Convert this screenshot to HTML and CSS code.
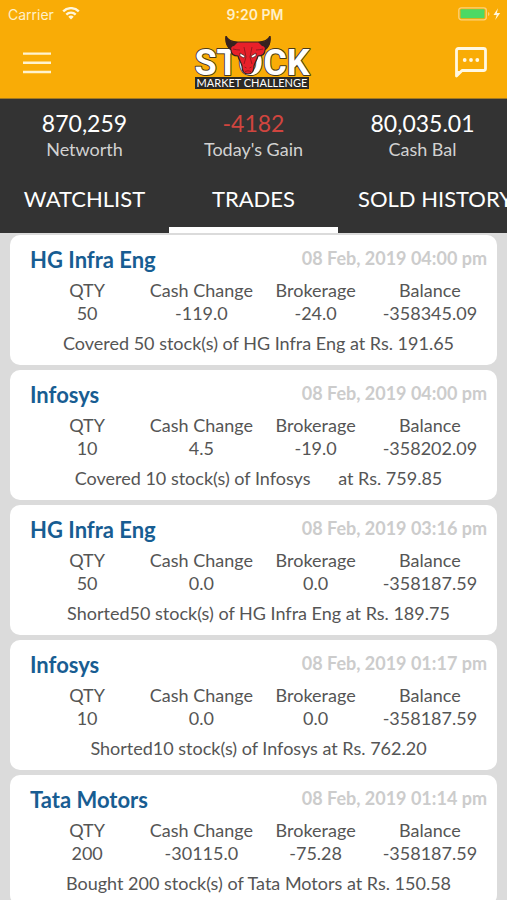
FILE: index.html
```html
<!DOCTYPE html>
<html lang="en">
<head>
<meta charset="utf-8">
<meta name="viewport" content="width=device-width, initial-scale=1">
<title>Stock Market Challenge</title>
<link rel="stylesheet" href="styles.css">
</head>
<body>
<div class="app">
  <header class="topbar">
    <div class="status">
      <div class="status-left">
        <span>Carrier</span>
        <svg width="18" height="14" viewBox="0 0 18 14" fill="none" stroke="#fff6dc" stroke-width="2.4" aria-hidden="true">
          <path d="M1.2 4.4a11 11 0 0 1 15.600 0"/>
          <path d="M4.300 7.600a6.700 6.700 0 0 1 9.400 0"/>
          <path d="M9 12.500 6.300 9.800a3.800 3.800 0 0 1 5.400 0z" fill="#fff6dc" stroke="none"/>
        </svg>
      </div>
      <span class="clock">9:20 PM</span>
      <div class="status-right">
        <svg width="44" height="14" viewBox="0 0 44 14" aria-hidden="true">
          <rect x="0.800" y="0.800" width="27.500" height="12" rx="2.500" fill="none" stroke="#fbd27a" stroke-width="1.300"/>
          <rect x="2.500" y="2.300" width="24" height="9" rx="1" fill="#4cd964"/>
          <path d="M30 5v4q1.500-.5 1.500-2T30 5z" fill="#fbd27a"/>
          <path d="M40 1.300 35.500 8h3.200l-1.500 5 5-7h-3.300z" fill="#fff6dc"/>
        </svg>
      </div>
    </div>
    <div class="navrow">
      <button class="icon-btn" aria-label="Menu">
        <svg width="28" height="22" viewBox="0 0 28 22" stroke="#fff3cf" stroke-width="2.400" aria-hidden="true"><path d="M0 1.600h28M0 10.800h28M0 20h28"/></svg>
      </button>
      <svg class="logo" width="120" height="54" viewBox="0 0 120 54" role="img" aria-label="Stock Market Challenge">
        <rect x="2" y="41" width="114" height="12" fill="#2b2925"/>
        <text class="logo-main" x="59" y="39" text-anchor="middle">STOCK</text>
        <text class="logo-sub" x="59" y="51" text-anchor="middle">MARKET CHALLENGE</text>
        <path d="M33 0c2 5 6 6 12 6h20c6 0 10-1 12-6 1 7-1 11-5 14 0 4-3 6-7 6-1 4-3 6-4 10 0 5-2 8-6 8s-6-3-6-8c-1-4-3-6-4-10-4 0-7-2-7-6-4-3-6-7-5-14z" fill="#e8202a" stroke="#33231f" stroke-width="1.200" stroke-linejoin="round"/>
        <path d="M33 0c2 5 6 6 12 6l-4 4c-2 0-3 1-3 4-4-3-6-7-5-14zM77 0c-2 5-6 6-12 6l4 4c2 0 3 1 3 4 4-3 6-7 5-14z" fill="#37221f"/>
        <path d="M47 17l5 3-1 2-4-2zM63 17l-5 3 1 2 4-2z" fill="#fff" stroke="#4a1517" stroke-width=".7"/>
        <path d="M40 13q4 1 7 1M70 13q-4 1-7 1M51 11l2 10-2 7M59 11l-2 10 2 7M51.500 31l2 1M58.500 31l-2 1M52 35.500q3-1.500 6 0" fill="none" stroke="#8d181e" stroke-width=".9"/>
      </svg>
      <button class="icon-btn" aria-label="Messages">
        <svg width="32" height="32" viewBox="0 0 32 32" aria-hidden="true">
          <path d="M1.500 29V3.500q0-2 2-2h25q2 0 2 2v18q0 2-2 2H7z" fill="none" stroke="#fff8e3" stroke-width="2.800" stroke-linejoin="round"/>
          <path d="M1 24h6l-6 6z" fill="#fff8e3"/>
          <circle cx="9.700" cy="13" r="1.900" fill="#fff8e3"/><circle cx="16" cy="13" r="1.900" fill="#fff8e3"/><circle cx="22.300" cy="13" r="1.900" fill="#fff8e3"/>
        </svg>
      </button>
    </div>
  </header>

  <section class="summary">
    <div class="stats">
      <div class="stat"><strong>870,259</strong><span>Networth</span></div>
      <div class="stat"><strong class="loss">-4182</strong><span>Today's Gain</span></div>
      <div class="stat"><strong>80,035.01</strong><span>Cash Bal</span></div>
    </div>
    <nav class="tabs">
      <a class="tab" href="#watchlist">WATCHLIST</a>
      <a class="tab active" href="#trades" aria-current="page">TRADES</a>
      <a class="tab" href="#sold">SOLD HISTORY</a>
    </nav>
  </section>

  <main class="list">
    <article class="card">
      <div class="card-head"><h2>HG Infra Eng</h2><time>08 Feb, 2019 04:00 pm</time></div>
      <table>
        <thead><tr><th>QTY</th><th>Cash Change</th><th>Brokerage</th><th>Balance</th></tr></thead>
        <tbody><tr><td>50</td><td>-119.0</td><td>-24.0</td><td>-358345.09</td></tr></tbody>
      </table>
      <p>Covered 50 stock(s) of HG Infra Eng at Rs. 191.65</p>
    </article>
    <article class="card">
      <div class="card-head"><h2>Infosys</h2><time>08 Feb, 2019 04:00 pm</time></div>
      <table>
        <thead><tr><th>QTY</th><th>Cash Change</th><th>Brokerage</th><th>Balance</th></tr></thead>
        <tbody><tr><td>10</td><td>4.5</td><td>-19.0</td><td>-358202.09</td></tr></tbody>
      </table>
      <p>Covered 10 stock(s) of Infosys      at Rs. 759.85</p>
    </article>
    <article class="card">
      <div class="card-head"><h2>HG Infra Eng</h2><time>08 Feb, 2019 03:16 pm</time></div>
      <table>
        <thead><tr><th>QTY</th><th>Cash Change</th><th>Brokerage</th><th>Balance</th></tr></thead>
        <tbody><tr><td>50</td><td>0.0</td><td>0.0</td><td>-358187.59</td></tr></tbody>
      </table>
      <p>Shorted50 stock(s) of HG Infra Eng at Rs. 189.75</p>
    </article>
    <article class="card">
      <div class="card-head"><h2>Infosys</h2><time>08 Feb, 2019 01:17 pm</time></div>
      <table>
        <thead><tr><th>QTY</th><th>Cash Change</th><th>Brokerage</th><th>Balance</th></tr></thead>
        <tbody><tr><td>10</td><td>0.0</td><td>0.0</td><td>-358187.59</td></tr></tbody>
      </table>
      <p>Shorted10 stock(s) of Infosys at Rs. 762.20</p>
    </article>
    <article class="card">
      <div class="card-head"><h2>Tata Motors</h2><time>08 Feb, 2019 01:14 pm</time></div>
      <table>
        <thead><tr><th>QTY</th><th>Cash Change</th><th>Brokerage</th><th>Balance</th></tr></thead>
        <tbody><tr><td>200</td><td>-30115.0</td><td>-75.28</td><td>-358187.59</td></tr></tbody>
      </table>
      <p>Bought 200 stock(s) of Tata Motors at Rs. 150.58</p>
    </article>
  </main>
</div>
</body>
</html>
```
FILE: styles.css
```css
* {
  box-sizing: border-box;
}

body {
  margin: 0;
  background: #dbdbdb;
  color: #555;
  font-family: Lato, "Open Sans", sans-serif;
  font-size: 18px;
}

.app {
  display: flex;
  flex-direction: column;
  height: 100vh;
}

.topbar {
  flex: none;
  background: #f9ac06;
  border-bottom: 1px solid #a37a22;
}

.status {
  display: grid;
  grid-template-columns: 1fr auto 1fr;
  align-items: center;
  height: 28px;
  padding: 0 5px 0 8px;
  color: #fff0c8;
  font-family: Inter, sans-serif;
  font-size: 14px;
}

.status-left {
  display: flex;
  align-items: center;
  gap: 8px;
}

.status-right {
  display: flex;
  justify-content: flex-end;
}

.clock {
  font-weight: 600;
}

.navrow {
  display: flex;
  align-items: center;
  justify-content: space-between;
  height: 70px;
  padding: 0 20px 0 23px;
}

.icon-btn {
  display: flex;
  padding: 0;
  border: 0;
  background: none;
}

.logo-main {
  font-family: Roboto, sans-serif;
  font-size: 36px;
  font-weight: 700;
  fill: #fff;
  stroke: #4a3a18;
  stroke-width: 2px;
  stroke-linejoin: round;
  paint-order: stroke;
}

.logo-sub {
  font-family: Lato, sans-serif;
  font-size: 11px;
  fill: #fff;
}

.summary {
  flex: none;
  background: #333;
  color: #fff;
}

.stats {
  display: grid;
  grid-template-columns: repeat(3, 1fr);
  padding-top: 10px;
}

.stat {
  display: flex;
  flex-direction: column;
  align-items: center;
}

.stat strong {
  font-size: 23px;
  font-weight: 400;
  line-height: 28px;
}

.stat .loss {
  color: #d0453f;
}

.stat span {
  color: #d2d2d2;
  font-size: 18px;
  line-height: 24px;
}

.tabs {
  display: flex;
  height: 72px;
  overflow: hidden;
}

.tab {
  flex: none;
  min-width: 33.333%;
  padding: 0 20px;
  border-bottom: 6px solid transparent;
  color: #fff;
  font-size: 22px;
  line-height: 76px;
  text-align: center;
  text-decoration: none;
  white-space: nowrap;
}

.tab.active {
  border-bottom-color: #fff;
}

.list {
  flex: 1;
  display: flex;
  flex-direction: column;
  gap: 5px;
  min-height: 0;
  padding: 2px 10px 5px;
  overflow-y: auto;
  scrollbar-width: none;
}

.card {
  flex: none;
  padding: 8px 10px 8px 20px;
  border-radius: 10px;
  background: #fff;
}

.card-head {
  display: flex;
  align-items: center;
  justify-content: space-between;
  height: 36px;
  padding-bottom: 4px;
}

.card h2 {
  margin: 0;
  color: #185d92;
  font-size: 22px;
  font-weight: 700;
}

.card time {
  padding-bottom: 2px;
  color: #ccc;
  font-size: 18px;
  font-weight: 700;
}

.card table {
  width: 100%;
  table-layout: fixed;
  border-collapse: collapse;
}

.card th,
.card td {
  padding: 0;
  font-size: 18px;
  font-weight: 400;
  line-height: 23px;
  text-align: center;
  white-space: nowrap;
}

.card p {
  margin: 5px 0 0;
  line-height: 27px;
  text-align: center;
  white-space: pre;
}
```
